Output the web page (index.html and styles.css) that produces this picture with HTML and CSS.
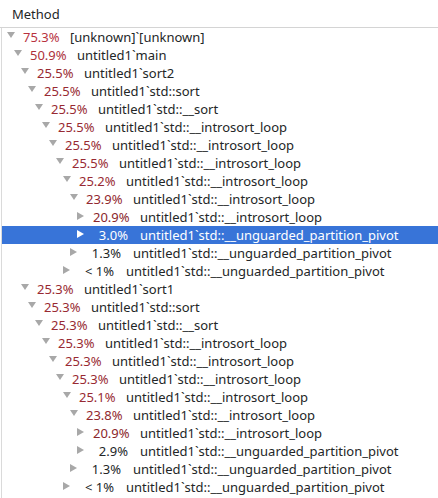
FILE: index.html
```html
<!DOCTYPE html>
<html>
<head>
<meta charset="utf-8">
<link rel="stylesheet" href="styles.css">
</head>
<body>
<div class="view">
  <div class="header"><span class="hcell">Method</span></div>
  <div class="tree">
    <div class="row l0"><span class="tw down"></span><span class="pct c75">75.3%</span><span class="name">[unknown]`[unknown]</span></div>
    <div class="row l1"><span class="tw down"></span><span class="pct c50">50.9%</span><span class="name">untitled1`main</span></div>
    <div class="row l2"><span class="tw down"></span><span class="pct c25">25.5%</span><span class="name">untitled1`sort2</span></div>
    <div class="row l3"><span class="tw down"></span><span class="pct c25">25.5%</span><span class="name">untitled1`std::sort</span></div>
    <div class="row l4"><span class="tw down"></span><span class="pct c25">25.5%</span><span class="name">untitled1`std::__sort</span></div>
    <div class="row l5"><span class="tw down"></span><span class="pct c25">25.5%</span><span class="name">untitled1`std::__introsort_loop</span></div>
    <div class="row l6"><span class="tw down"></span><span class="pct c25">25.5%</span><span class="name">untitled1`std::__introsort_loop</span></div>
    <div class="row l7"><span class="tw down"></span><span class="pct c25">25.5%</span><span class="name">untitled1`std::__introsort_loop</span></div>
    <div class="row l8"><span class="tw down"></span><span class="pct c25">25.2%</span><span class="name">untitled1`std::__introsort_loop</span></div>
    <div class="row l9"><span class="tw down"></span><span class="pct c23">23.9%</span><span class="name">untitled1`std::__introsort_loop</span></div>
    <div class="row l10"><span class="tw right"></span><span class="pct c20">20.9%</span><span class="name">untitled1`std::__introsort_loop</span></div>
    <div class="row l10 selected"><span class="tw right"></span><span class="pct">3.0%</span><span class="name">untitled1`std::__unguarded_partition_pivot</span></div>
    <div class="row l9"><span class="tw right"></span><span class="pct">1.3%</span><span class="name">untitled1`std::__unguarded_partition_pivot</span></div>
    <div class="row l8"><span class="tw right"></span><span class="pct">&lt; 1%</span><span class="name">untitled1`std::__unguarded_partition_pivot</span></div>
    <div class="row l2"><span class="tw down"></span><span class="pct c25">25.3%</span><span class="name">untitled1`sort1</span></div>
    <div class="row l3"><span class="tw down"></span><span class="pct c25">25.3%</span><span class="name">untitled1`std::sort</span></div>
    <div class="row l4"><span class="tw down"></span><span class="pct c25">25.3%</span><span class="name">untitled1`std::__sort</span></div>
    <div class="row l5"><span class="tw down"></span><span class="pct c25">25.3%</span><span class="name">untitled1`std::__introsort_loop</span></div>
    <div class="row l6"><span class="tw down"></span><span class="pct c25">25.3%</span><span class="name">untitled1`std::__introsort_loop</span></div>
    <div class="row l7"><span class="tw down"></span><span class="pct c25">25.3%</span><span class="name">untitled1`std::__introsort_loop</span></div>
    <div class="row l8"><span class="tw down"></span><span class="pct c25">25.1%</span><span class="name">untitled1`std::__introsort_loop</span></div>
    <div class="row l9"><span class="tw down"></span><span class="pct c23">23.8%</span><span class="name">untitled1`std::__introsort_loop</span></div>
    <div class="row l10"><span class="tw right"></span><span class="pct c20">20.9%</span><span class="name">untitled1`std::__introsort_loop</span></div>
    <div class="row l10"><span class="tw right"></span><span class="pct">2.9%</span><span class="name">untitled1`std::__unguarded_partition_pivot</span></div>
    <div class="row l9"><span class="tw right"></span><span class="pct">1.3%</span><span class="name">untitled1`std::__unguarded_partition_pivot</span></div>
    <div class="row l8"><span class="tw right"></span><span class="pct">&lt; 1%</span><span class="name">untitled1`std::__unguarded_partition_pivot</span></div>
  </div>
</div>
</body>
</html>
```

FILE: styles.css
```css
html, body {
  margin: 0;
  padding: 0;
  background: #ffffff;
}

body {
  font-family: "Noto Sans", "DejaVu Sans", sans-serif;
  font-size: 13px;
  color: #232627;
}

.view {
  width: 438px;
  height: 498px;
  overflow: hidden;
}

.header {
  height: 27px;
  border-bottom: 1px solid #d4d4d4;
  display: flex;
  align-items: center;
  padding-left: 12px;
}

.hcell {
  line-height: 18px;
}

.tree {
  margin-left: 1px;
  border-left: 1px solid #dadada;
  height: 470px;
}

.row {
  height: 18px;
  display: flex;
  align-items: center;
  white-space: nowrap;
}

.l0 { padding-left: 5px; }
.l1 { padding-left: 12px; }
.l2 { padding-left: 19px; }
.l3 { padding-left: 26px; }
.l4 { padding-left: 33px; }
.l5 { padding-left: 40px; }
.l6 { padding-left: 47px; }
.l7 { padding-left: 54px; }
.l8 { padding-left: 61px; }
.l9 { padding-left: 68px; }
.l10 { padding-left: 75px; }

.tw {
  width: 16px;
  height: 18px;
  flex: none;
  position: relative;
}

.tw.down::before {
  content: "";
  position: absolute;
  left: 0;
  top: 4px;
  border-left: 4px solid transparent;
  border-right: 4px solid transparent;
  border-top: 6px solid #a8a8a8;
}

.tw.right::before {
  content: "";
  position: absolute;
  left: 0;
  top: 4px;
  border-top: 4px solid transparent;
  border-bottom: 4px solid transparent;
  border-left: 7px solid #a8a8a8;
}

.pct {
  width: 35px;
  text-align: right;
  flex: none;
}

.name {
  margin-left: 12px;
}

.c75 { color: #b8323e; }
.c50 { color: #ad303a; }
.c25 { color: #982a32; }
.c23 { color: #92282f; }
.c20 { color: #8a262b; }

.selected {
  background: #3874d8;
  color: #ffffff;
}

.selected .tw.right::before {
  border-left-color: #ffffff;
}
```
